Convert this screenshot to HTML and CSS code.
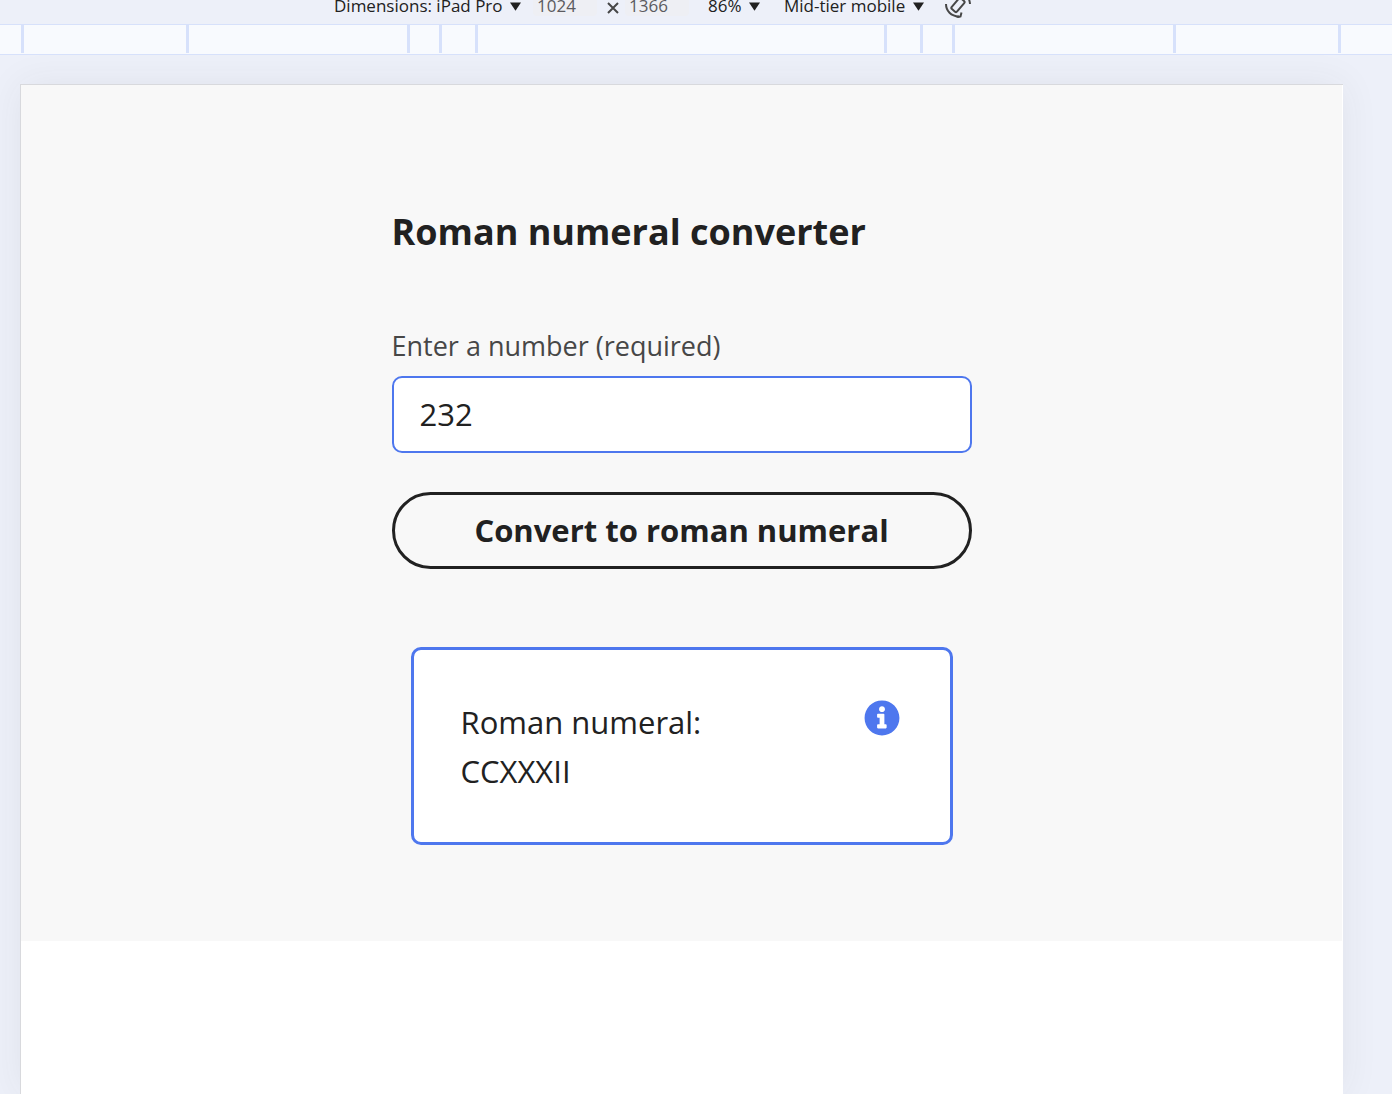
FILE: index.html
```html
<!DOCTYPE html>
<html lang="en">
<head>
<meta charset="utf-8">
<meta name="viewport" content="width=device-width, initial-scale=1">
<title>Roman numeral converter</title>
<link rel="stylesheet" href="styles.css">
</head>
<body>
<header class="toolbar">
  <div class="picker">
    <select class="picker-select" aria-label="Device"><option>Dimensions: iPad Pro</option></select>
    <svg class="arrow" viewBox="0 0 12 9" aria-hidden="true"><path d="M0 0h12L6 9z"/></svg>
  </div>
  <div class="size">
    <input class="size-input" type="text" value="1024" aria-label="Width">
    <svg class="times" viewBox="0 0 12 12" aria-hidden="true"><path d="M1 1l10 10M11 1L1 11"/></svg>
    <input class="size-input" type="text" value="1366" aria-label="Height">
  </div>
  <div class="picker">
    <select class="picker-select" aria-label="Zoom"><option>86%</option></select>
    <svg class="arrow" viewBox="0 0 12 9" aria-hidden="true"><path d="M0 0h12L6 9z"/></svg>
  </div>
  <div class="picker">
    <select class="picker-select" aria-label="Throttling"><option>Mid-tier mobile</option></select>
    <svg class="arrow" viewBox="0 0 12 9" aria-hidden="true"><path d="M0 0h12L6 9z"/></svg>
  </div>
  <button class="rotate" type="button" aria-label="Rotate">
    <svg viewBox="0 0 28 28" aria-hidden="true">
      <rect x="10.500" y="8" width="7" height="14" rx="1.500" transform="rotate(40 14 15)"/>
      <path d="M2 14c0 7 5 12 13 12.500M12.500 27.500l4-1 1-4M26 14C25.500 7 21 3 15 2.500"/>
    </svg>
  </button>
</header>
<div class="ruler" aria-hidden="true">
  <span></span><span></span><span></span><span></span><span></span><span></span><span></span><span></span><span></span><span></span>
</div>
<div class="stage">
  <div class="device">
    <main class="app">
      <form class="converter">
        <h1 class="title">Roman numeral converter</h1>
        <label class="label" for="number">Enter a number (required)</label>
        <input class="number" id="number" type="text" inputmode="numeric" value="232" required>
        <button class="convert" type="button">Convert to roman numeral</button>
        <output class="result" for="number">
          <span class="result-text">Roman numeral:<br>CCXXXII</span>
          <svg class="info" viewBox="0 0 512 512" aria-hidden="true"><path d="M256 8C119 8 8 119 8 256s111 248 248 248 248-111 248-248S393 8 256 8zm0 80c23 0 42 19 42 42s-19 42-42 42-42-19-42-42 19-42 42-42zm66 304c0 7-5 12-12 12H198c-7 0-12-5-12-12v-34c0-7 5-12 12-12h24v-94h-24c-7 0-12-5-12-12v-34c0-7 5-12 12-12h80c7 0 12 5 12 12v140h20c7 0 12 5 12 12z"/></svg>
        </output>
      </form>
    </main>
  </div>
</div>
</body>
</html>
```
FILE: styles.css
```css
* { box-sizing: border-box; }

body {
  margin: 0;
  min-height: 100vh;
  display: flex;
  flex-direction: column;
  background: #edf0f9;
  color: #212121;
  font-family: "Open Sans", "Noto Sans", sans-serif;
}

input, select, button { font: inherit; color: inherit; }

.toolbar {
  display: flex;
  align-items: flex-end;
  justify-content: center;
  height: 24px;
  padding: 0 86px 8px 0;
  overflow: hidden;
  font-size: 17px;
  line-height: 20px;
}

.picker { display: flex; align-items: center; gap: 7px; margin-right: 24px; }

.picker-select {
  height: 20px;
  padding: 0;
  border: 0;
  background: none;
  appearance: none;
}

.arrow { width: 11px; height: 9px; fill: #212121; }

.size { display: flex; align-items: center; color: #5b5b5f; margin: 0 19px 0 -12px; }

.size-input {
  width: 64px;
  height: 20px;
  padding: 0 4px;
  border: 0;
  border-radius: 4px;
  background: #eeeff4;
}

.times {
  width: 12px;
  height: 12px;
  margin: 4px 6px 0 10px;
  fill: none;
  stroke: #474747;
  stroke-width: 2;
}

.rotate { flex: none; width: 28px; height: 28px; padding: 0; border: 0; background: none; margin: 0 0 -2px -4px; }
.rotate svg { display: block; fill: none; stroke: #474747; stroke-width: 2; }

.ruler {
  display: grid;
  grid-template-columns: 165px 221px 32px 36px 409px 36px 32px 221px 165px 3px;
  justify-content: center;
  height: 31px;
  padding: 0 30px 1px 0;
  border: solid #d7e1fb;
  border-width: 1px 0;
  background: #f8fafe;
}

.ruler span { border-left: 3px solid #d7e1fb; }

.stage { flex: 1; display: flex; padding: 29px 49px 0 20px; overflow: hidden; }

.device {
  flex: 1;
  border: solid #d8d9dd;
  border-width: 1px 0 0 1px;
  background: #fff;
  box-shadow: 0 0 36px rgba(60, 60, 60, 0.07);
}

.app {
  display: flex;
  justify-content: center;
  margin-right: 1px;
  padding: 115px 24px 96px;
  background: #f8f8f8;
}

.converter { display: flex; flex-direction: column; width: 580px; }

.title { margin: 0 0 62px; font-size: 36px; line-height: 64px; font-weight: 700; }

.label { margin-bottom: 10px; color: #474747; font-size: 27px; line-height: 40px; }

.number {
  height: 77px;
  padding: 0 26px 2px;
  border: 2px solid #4e77ee;
  border-radius: 10px;
  background: #fff;
  font-size: 31px;
}

.convert {
  height: 77px;
  margin-top: 39px;
  padding: 0 6px 2px;
  border: 3px solid #212121;
  border-radius: 39px;
  background: none;
  font-size: 31px;
  font-weight: 700;
}

.result {
  display: flex;
  justify-content: space-between;
  margin: 78px 19px 0;
  padding: 48px 50px 46px 47px;
  border: 3px solid #4e77ee;
  border-radius: 10px;
  background: #fff;
  font-size: 31px;
  line-height: 49px;
}

.info { flex: none; width: 36px; height: 36px; margin-top: 2px; fill: #4e77ee; }
```
